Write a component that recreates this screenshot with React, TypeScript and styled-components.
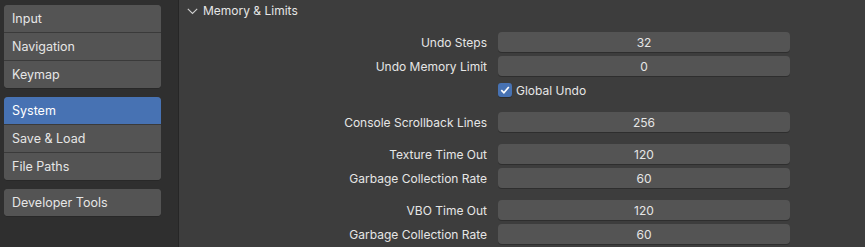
import styled, { createGlobalStyle } from 'styled-components';

const GlobalStyle = createGlobalStyle`
  html, body {
    margin: 0;
    padding: 0;
    background: #3d3d3d;
  }
  body {
    font-family: Inter, 'Noto Sans', 'DejaVu Sans', sans-serif;
    font-size: 12px;
    color: #e6e6e6;
  }
`;

type Field = { label: string; value?: string; check?: boolean; gap?: boolean };

const navGroups = [
  ['Input', 'Navigation', 'Keymap'],
  ['System', 'Save & Load', 'File Paths'],
  ['Developer Tools'],
];

const fields: Field[] = [
  { label: 'Undo Steps', value: '32' },
  { label: 'Undo Memory Limit', value: '0' },
  { label: 'Global Undo', check: true },
  { label: 'Console Scrollback Lines', value: '256', gap: true },
  { label: 'Texture Time Out', value: '120', gap: true },
  { label: 'Garbage Collection Rate', value: '60' },
  { label: 'VBO Time Out', value: '120', gap: true },
  { label: 'Garbage Collection Rate', value: '60' },
];

const App = () => {
  return (
    <Window>
      <GlobalStyle />
      <Sidebar>
        {navGroups.map((group, i) => (
          <NavGroup key={i}>
            {group.map((item) => (
              <NavItem key={item} $active={item === 'System'}>
                {item}
              </NavItem>
            ))}
          </NavGroup>
        ))}
      </Sidebar>

      <Main>
        <PanelHeader>
          <svg width="11" height="7" viewBox="0 0 11 7">
            <polyline
              points="0.8,0.8 5.5,5.5 10.2,0.8"
              fill="none"
              stroke="#cfcfcf"
              strokeWidth="1.1"
            />
          </svg>
          Memory &amp; Limits
        </PanelHeader>

        <PanelBody>
          {fields.map((f, i) => (
            <Row key={i} $gap={f.gap}>
              <Label>{f.check ? '' : f.label}</Label>
              {f.check ? (
                <CheckRow>
                  <CheckBox>
                    <svg width="10" height="10" viewBox="0 0 10 10">
                      <polyline
                        points="1.3,5.2 3.9,7.8 8.8,2"
                        fill="none"
                        stroke="#ffffff"
                        strokeWidth="1.7"
                      />
                    </svg>
                  </CheckBox>
                  {f.label}
                </CheckRow>
              ) : (
                <NumberField>{f.value}</NumberField>
              )}
            </Row>
          ))}
        </PanelBody>
      </Main>
    </Window>
  );
};

export default App;

const Window = styled.div`
  display: flex;
  width: 865px;
  height: 247px;
  overflow: hidden;
`;

// 1. 왼쪽 메뉴
const Sidebar = styled.nav`
  display: flex;
  flex-direction: column;
  gap: 9px;

  width: 174px;
  padding: 5px 0 0 4px;

  background: #2f2f2f;
  border-right: 1px solid #262626;

  font-size: 12.5px;
`;

const NavGroup = styled.div`
  display: flex;
  flex-direction: column;

  width: 157px;

  background: #545454;
  border-radius: 4px;
  box-shadow: 0 1px 0 #282828;
  overflow: hidden;
`;

const NavItem = styled.div<{ $active?: boolean }>`
  display: flex;
  align-items: center;

  height: 27px;
  padding-left: 8px;

  background: ${({ $active }) => ($active ? '#4772b3' : '#545454')};
  color: ${({ $active }) => ($active ? '#ffffff' : '#e6e6e6')};

  & + & {
    border-top: 1px solid #3a3a3a;
  }
`;

// 2. 설정 패널
const Main = styled.main`
  display: flex;
  flex-direction: column;
  flex: 1;

  background: #3d3d3d;
`;

const PanelHeader = styled.div`
  display: flex;
  align-items: center;
  gap: 5px;

  height: 21px;
  padding-left: 8px;

  color: #e6e6e6;

  svg {
    margin-top: 1px;
  }
`;

const PanelBody = styled.div`
  display: flex;
  flex-direction: column;
  padding-top: 9px;
`;

const Row = styled.div<{ $gap?: boolean }>`
  display: grid;
  grid-template-columns: 308px 292px;
  column-gap: 11px;
  align-items: center;

  height: 24px;
  margin-top: ${({ $gap }) => ($gap ? '8px' : '0')};
`;

const Label = styled.div`
  text-align: right;
  white-space: nowrap;
`;

const NumberField = styled.div`
  display: flex;
  align-items: center;
  justify-content: center;

  height: 20px;

  background: #545454;
  border-radius: 4px;
  box-shadow: 0 1px 0 #2e2e2e;

  color: #e6e6e6;
`;

const CheckRow = styled.div`
  display: flex;
  align-items: center;
  gap: 4px;
`;

const CheckBox = styled.div`
  display: flex;
  align-items: center;
  justify-content: center;

  width: 14px;
  height: 14px;

  background: #4772b3;
  border-radius: 3px;
  box-shadow: 0 1px 0 #2e2e2e;
`;
